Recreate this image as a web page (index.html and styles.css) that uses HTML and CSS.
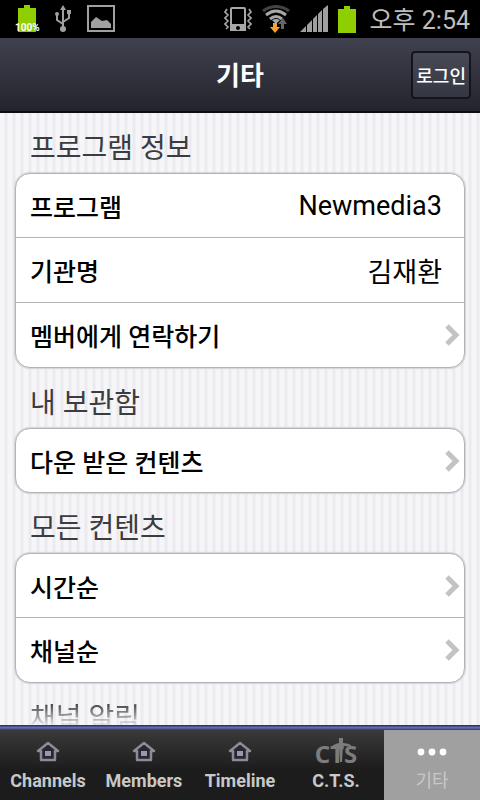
FILE: index.html
```html
<!DOCTYPE html>
<html lang="ko">
<head>
  <meta charset="UTF-8">
  <meta name="viewport" content="width=device-width, initial-scale=1.0">
  <title>기타</title>
  <link rel="stylesheet" href="styles.css">
</head>
<body>
  <div class="status-bar">
    <div class="status-left">
      <div class="battery-level">
        <svg width="24" height="28" viewBox="0 0 24 28"><path d="M3 3h6V0h6v3h6v24H3z" fill="#8fce00"/></svg>
        <span class="battery-text">100%</span>
      </div>
      <!-- usb -->
      <svg width="18" height="28" viewBox="0 0 18 28" fill="none" stroke="#a0a0a0" stroke-width="2">
        <path d="M9 4v20M9 19l-6-4V9M9 17l6-4V8"/>
        <path d="M9 0l3 5H6z" fill="#a0a0a0" stroke="none"/>
        <circle cx="9" cy="24" r="3" fill="#a0a0a0" stroke="none"/>
        <circle cx="3" cy="9" r="2" fill="#a0a0a0" stroke="none"/>
        <path d="M13 5h4v4h-4z" fill="#a0a0a0" stroke="none"/>
      </svg>
      <!-- picture -->
      <svg width="28" height="28" viewBox="0 0 28 28">
        <path d="M1 1h26v25H1z" fill="none" stroke="#a0a0a0" stroke-width="2"/>
        <path d="M4 23v-6l5-5 3 2 3 2 5-1 4 4v4z" fill="#a0a0a0"/>
      </svg>
    </div>
    <div class="status-right">
      <!-- vibrate -->
      <svg width="28" height="26" viewBox="0 0 28 26" fill="none" stroke="#a8a8a8" stroke-width="2">
        <path d="M3 3L1 6l3 3-3 3 3 3-3 3 3 3-2 2M25 3l2 3-3 3 3 3-3 3 3 3-3 3 2 2" stroke-width="1.6"/>
        <rect x="7" y="2" width="14" height="22" rx="1"/>
        <path d="M6 18h16v7H6z" fill="#a8a8a8" stroke="none"/>
        <circle cx="14" cy="22" r="2" fill="#000" stroke="none"/>
      </svg>
      <!-- wifi -->
      <svg width="28" height="28" viewBox="0 0 28 28" fill="none" stroke-width="3">
        <path d="M1 6Q14-3 27 6" stroke="#444"/>
        <path d="M4 10Q14 2 24 10" stroke="#a8a8a8"/>
        <path d="M8 14q6-5 12 0" stroke="#a8a8a8"/>
        <path d="M10 15q4-2 8 0l-4 4z" fill="#a8a8a8" stroke="none"/>
        <path d="M11 18h4v4h3l-5 6-5-6h3z" fill="#f7a02c"/>
        <path d="M19 24v-5h-3l5-6 4 6h-3v5z" fill="#666"/>
      </svg>
      <!-- signal -->
      <svg width="28" height="28" viewBox="0 0 28 28" fill="#a0a0a0">
        <path d="M0 27l6-6v6zM7 20l5-5v12H7zM13 14l4-4v17h-4zM18 9l4-4v22h-4zM23 4l5-4v27h-5z"/>
      </svg>
      <svg width="18" height="27" viewBox="0 0 18 27"><path d="M0 3h6V0h6v3h6v24H0z" fill="#8fce00"/></svg>
      <span class="clock">오후 2:54</span>
    </div>
  </div>

  <header class="header">
    <h1 class="header-title">기타</h1>
    <button class="login-button" type="button">로그인</button>
  </header>

  <main class="content">
    <h2 class="section-title">프로그램 정보</h2>
    <ul class="list">
      <li class="row"><span>프로그램</span><span class="row-value">Newmedia3</span></li>
      <li class="row"><span>기관명</span><span class="row-value">김재환</span></li>
      <li class="row">
        <a class="row-link" href="#contact">멤버에게 연락하기
          <svg class="arrow" width="16" height="24" viewBox="0 0 16 24"><path d="M3 3l9 9-9 9"/></svg>
        </a>
      </li>
    </ul>

    <h2 class="section-title">내 보관함</h2>
    <ul class="list">
      <li class="row">
        <a class="row-link" href="#downloads">다운 받은 컨텐츠
          <svg class="arrow" width="16" height="24" viewBox="0 0 16 24"><path d="M3 3l9 9-9 9"/></svg>
        </a>
      </li>
    </ul>

    <h2 class="section-title">모든 컨텐츠</h2>
    <ul class="list">
      <li class="row">
        <a class="row-link" href="#time">시간순
          <svg class="arrow" width="16" height="24" viewBox="0 0 16 24"><path d="M3 3l9 9-9 9"/></svg>
        </a>
      </li>
      <li class="row">
        <a class="row-link" href="#channel">채널순
          <svg class="arrow" width="16" height="24" viewBox="0 0 16 24"><path d="M3 3l9 9-9 9"/></svg>
        </a>
      </li>
    </ul>

    <h2 class="section-title fading">채널 알림</h2>
  </main>

  <nav class="tabs">
    <a class="tab" href="#channels">
      <svg width="24" height="24" viewBox="0 0 24 24"><path class="house" d="M12 3L2 11h3v9h14v-9h3z"/><path d="M9 11h6v5H9z" fill="#9a9aa2"/></svg>
      <span>Channels</span>
    </a>
    <a class="tab" href="#members">
      <svg width="24" height="24" viewBox="0 0 24 24"><path class="house" d="M12 3L2 11h3v9h14v-9h3z"/><path d="M9 11h6v5H9z" fill="#9a9aa2"/></svg>
      <span>Members</span>
    </a>
    <a class="tab" href="#timeline">
      <svg width="24" height="24" viewBox="0 0 24 24"><path class="house" d="M12 3L2 11h3v9h14v-9h3z"/><path d="M9 11h6v5H9z" fill="#9a9aa2"/></svg>
      <span>Timeline</span>
    </a>
    <a class="tab" href="#cts">
      <span class="cts-logo">CTS
        <svg class="cross" width="20" height="28" viewBox="0 0 20 28"><path d="M8 1h4v5q4 0 8 2v2q-4-1-8-1l-1 16H9L8 9q-5 0-8 2 2-4 8-5z" fill="#7c7c7c"/></svg>
      </span>
      <span>C.T.S.</span>
    </a>
    <a class="tab active" href="#etc">
      <svg width="30" height="24" viewBox="0 0 30 24" fill="#fff"><circle cx="4" cy="12" r="3.4"/><circle cx="15" cy="12" r="3.4"/><circle cx="26" cy="12" r="3.4"/></svg>
      <span>기타</span>
    </a>
  </nav>
</body>
</html>
```
FILE: styles.css
```css
* {
  box-sizing: border-box;
}

body {
  margin: 0;
  height: 100vh;
  display: flex;
  flex-direction: column;
  font-family: Roboto, "Noto Sans CJK KR", sans-serif;
  background-color: #f4f4f7;
}

a {
  color: inherit;
  text-decoration: none;
}

svg {
  display: block;
}

.status-bar {
  flex: none;
  height: 38px;
  padding: 0 10px 0 15px;
  display: flex;
  justify-content: space-between;
  align-items: center;
  background-color: #000;
  color: #bebebe;
}

.status-left,
.status-right {
  display: flex;
  align-items: center;
}

.status-left {
  gap: 15px;
}

.status-right {
  gap: 10px;
}

.battery-level {
  position: relative;
}

.battery-text {
  position: absolute;
  left: 0;
  bottom: 0;
  font-size: 10px;
  line-height: 10px;
  font-weight: bold;
  color: #fff;
}

.clock {
  margin-left: 4px;
  padding-top: 4px;
  font-size: 25px;
  line-height: 36px;
}

.header {
  flex: none;
  height: 75px;
  padding: 0 9px;
  display: grid;
  grid-template-columns: 1fr auto 1fr;
  align-items: center;
  background: linear-gradient(#40414e, #23242c);
  border-bottom: 2px solid #0c0d12;
  color: #fff;
}

.header-title {
  grid-column: 2;
  margin: 0;
  padding-top: 2px;
  font-size: 26px;
  line-height: 40px;
  font-weight: bold;
}

.login-button {
  justify-self: end;
  height: 48px;
  padding: 0 3px;
  font-family: inherit;
  font-size: 18px;
  font-weight: 500;
  color: #fff;
  background: linear-gradient(#474955, #343642);
  border: 2px solid #14151c;
  border-radius: 4px;
}

.content {
  flex: 1;
  min-height: 0;
  overflow: hidden;
  padding: 0 15px;
  background: repeating-linear-gradient(90deg, #f6f6f9 0, #f6f6f9 4px, #ebebef 5px, #ebebef 7px, #f6f6f9 8px);
}

.section-title {
  margin: 0;
  padding: 8px 15px 0;
  height: 60px;
  font-size: 28px;
  line-height: 56px;
  font-weight: 400;
  color: #3c3c40;
}

.fading {
  mask-image: linear-gradient(#000 20px, transparent 44px);
}

.list {
  margin: 0;
  padding: 0;
  list-style: none;
  background-color: #fff;
  border: 1px solid #b4b4b8;
  border-radius: 15px;
  box-shadow: 0 0 1px 1px #d4d4d8;
}

.row {
  height: 65px;
  padding: 0 22px 0 14px;
  display: flex;
  justify-content: space-between;
  align-items: center;
  font-size: 25px;
  font-weight: 500;
  color: #000;
  border-top: 1px solid #b4b4b8;
}

.row:first-child {
  height: 63px;
  border-top: none;
}

.row-value {
  font-size: 27px;
  font-weight: 400;
}

.row-link {
  flex: 1;
  display: flex;
  justify-content: space-between;
  align-items: center;
  margin-right: -18px;
}

.arrow {
  fill: none;
  stroke: #c3c3c3;
  stroke-width: 5;
}

.tabs {
  flex: none;
  height: 75px;
  display: flex;
  padding-top: 5px;
  background: linear-gradient(#2b3768 0, #2b3768 1px, #5f6cb4 2px, #5f6cb4 3px, #2b3768 5px, #3a3a3a 5px, #1c1c1c 45px);
}

.tab {
  flex: 1;
  display: flex;
  flex-direction: column;
  align-items: center;
  padding-top: 10px;
  gap: 4px;
  font-size: 18px;
  line-height: 26px;
  font-weight: bold;
  color: #c8c8c8;
}

.tab.active {
  background-color: #a0a0a0;
  font-weight: 400;
  color: #c8c8c8;
}

.house {
  fill: #262636;
  stroke: #8c8c94;
  stroke-width: 2.5;
  stroke-linejoin: round;
}

.cts-logo {
  position: relative;
  height: 24px;
  padding-top: 3px;
  font-family: "Noto Sans", sans-serif;
  font-size: 24px;
  line-height: 21px;
  color: #7c7c7c;
}

.cross {
  position: absolute;
  left: 16px;
  top: -3px;
}
```
